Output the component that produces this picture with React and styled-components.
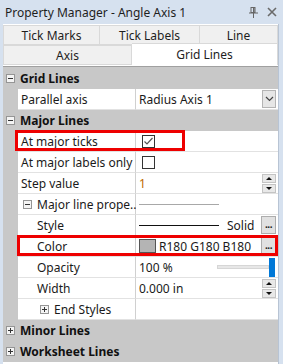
import React from 'react';
import styled, { createGlobalStyle } from 'styled-components';

const GlobalStyle = createGlobalStyle`
  body {
    margin: 0;
    font-family: "Noto Sans", "Open Sans", sans-serif;
  }
`;

const Window = styled.div`
  width: 283px;
  height: 364px;
  background: #d6e1ef;
  display: flex;
  flex-direction: column;
  overflow: hidden;
`;

const TitleBar = styled.div`
  height: 24px;
  display: flex;
  align-items: center;
  padding: 0 6px 0 5px;
  font-size: 12px;
  color: #1e1e1e;
`;

const Title = styled.div`
  flex: 1;
  white-space: nowrap;
`;

const TitleIcons = styled.div`
  display: flex;
  align-items: center;
  gap: 9px;
`;

const Panel = styled.div`
  margin-left: 3px;
  width: 275px;
  flex: 1;
  background: #fff;
  display: flex;
  flex-direction: column;
  border-right: 1px solid #b8c4d4;
`;

const TabRow = styled.div`
  display: flex;
  height: 20px;
  margin-top: ${p => (p.$first ? '1px' : '0')};
  align-items: flex-end;
`;

const Tab = styled.div`
  width: ${p => p.$w}px;
  height: ${p => (p.$active ? 22 : 20)}px;
  box-sizing: border-box;
  display: flex;
  align-items: center;
  justify-content: center;
  font-size: 12px;
  color: #1e1e1e;
  background: ${p => (p.$active ? '#fff' : '#f0f0f0')};
  border: 1px solid #d9d9d9;
  border-left: ${p => (p.$first ? '1px solid #d9d9d9' : 'none')};
  border-bottom: ${p => (p.$active ? 'none' : '1px solid #d9d9d9')};
  position: relative;
  z-index: ${p => (p.$active ? 1 : 0)};
`;

const Grid = styled.div`
  margin-top: 1px;
  border-top: 1px solid #a0a0a0;
  padding-top: 1px;
  display: flex;
  flex-direction: column;
  background: #c8c8c8;
`;

const Category = styled.div`
  height: 21px;
  display: flex;
  align-items: center;
  padding-left: 3px;
  gap: 5px;
  font-size: 12px;
  font-weight: 700;
  color: #111;
`;

const Row = styled.div`
  height: 21px;
  display: flex;
  position: relative;
  font-size: 12px;
  color: #1a1a1a;
`;

const Gutter = styled.div`
  width: 15px;
  flex-shrink: 0;
`;

const Name = styled.div`
  width: 118px;
  flex-shrink: 0;
  box-sizing: border-box;
  background: #fff;
  border-right: 1px solid #d0d0d0;
  border-bottom: 1px solid #e2e2e2;
  display: flex;
  align-items: center;
  gap: 5px;
  padding-left: ${p => p.$indent}px;
  white-space: nowrap;
`;

const Value = styled.div`
  flex: 1;
  box-sizing: border-box;
  background: #fff;
  border-bottom: 1px solid #e2e2e2;
  display: flex;
  align-items: center;
  padding-left: 3px;
  padding-right: 2px;
  white-space: nowrap;
  color: ${p => p.$color || '#1a1a1a'};
`;

const Fill = styled.div`
  flex: 1;
`;

const ToggleBox = styled.div`
  width: 9px;
  height: 9px;
  box-sizing: border-box;
  border: 1px solid #959595;
  background: #f4f4f4;
  position: relative;
  flex-shrink: 0;
  &::before {
    content: '';
    position: absolute;
    left: 1px;
    right: 1px;
    top: 3px;
    height: 1px;
    background: #333;
  }
  &::after {
    content: '';
    display: ${p => (p.$plus ? 'block' : 'none')};
    position: absolute;
    top: 1px;
    bottom: 1px;
    left: 3px;
    width: 1px;
    background: #333;
  }
`;

const CheckBox = styled.div`
  width: 13px;
  height: 13px;
  box-sizing: border-box;
  border: 1px solid #333;
  background: #fff;
  margin-left: 3px;
  display: flex;
  align-items: center;
  justify-content: center;
`;

const DropButton = styled.div`
  width: 14px;
  height: 18px;
  box-sizing: border-box;
  border: 1px solid #b4b4b4;
  background: #e6e6e6;
  display: flex;
  align-items: center;
  justify-content: center;
`;

const Spinner = styled.div`
  width: 14px;
  display: flex;
  flex-direction: column;
  gap: 1px;
`;

const SpinButton = styled.div`
  height: 9px;
  box-sizing: border-box;
  border: 1px solid #c4c4c4;
  background: #e8e8e8;
  display: flex;
  align-items: center;
  justify-content: center;
`;

const Arrow = styled.div`
  width: 0;
  height: 0;
  border-left: 3px solid transparent;
  border-right: 3px solid transparent;
  ${p => (p.$up ? 'border-bottom: 3px solid #111;' : 'border-top: 3px solid #111;')}
`;

const DotsButton = styled.div`
  width: 15px;
  height: 18px;
  box-sizing: border-box;
  border: 1px solid #adadad;
  background: #e1e1e1;
  display: flex;
  align-items: flex-end;
  justify-content: center;
  padding-bottom: 4px;
  font-size: 10px;
  font-weight: 700;
  line-height: 1;
  letter-spacing: -0.5px;
`;

const LineSample = styled.div`
  width: 80px;
  height: 1px;
  background: ${p => p.$color};
  flex-shrink: 0;
`;

const StyleName = styled.span`
  margin-left: 8px;
`;

const Swatch = styled.div`
  width: 17px;
  height: 14px;
  box-sizing: border-box;
  border: 1px solid #555;
  background: rgb(180, 180, 180);
  margin-right: 3px;
`;

const SliderTrack = styled.div`
  width: 52px;
  height: 4px;
  box-sizing: border-box;
  border: 1px solid #d6d6d6;
  background: #e7e7e7;
  margin-left: auto;
`;

const SliderThumb = styled.div`
  width: 6px;
  height: 19px;
  background: #0078d7;
  margin-right: 1px;
`;

const Highlight = styled.div`
  position: absolute;
  top: -1px;
  height: 21px;
  left: ${p => p.$left}px;
  width: ${p => p.$width}px;
  box-sizing: border-box;
  border: 3px solid #ee0000;
  pointer-events: none;
`;

const Bottom = styled.div`
  flex: 1;
  background: #fff;
`;

const Chevron = () => (
  <svg width="9" height="6" viewBox="0 0 9 6">
    <polyline points="1,1 4.5,4.5 8,1" fill="none" stroke="#444" strokeWidth="1.2" />
  </svg>
);

const Check = () => (
  <svg width="11" height="11" viewBox="0 0 11 11">
    <polyline points="1.5,5.5 4,8 9.5,2" fill="none" stroke="#555" strokeWidth="1.2" />
  </svg>
);

const PinIcon = () => (
  <svg width="9" height="11" viewBox="0 0 9 11">
    <rect x="2" y="0.5" width="4" height="5" fill="none" stroke="#666" />
    <rect x="4" y="1" width="1.5" height="4.5" fill="#666" />
    <line x1="0" y1="6" x2="9" y2="6" stroke="#666" />
    <line x1="4.5" y1="6" x2="4.5" y2="11" stroke="#666" />
  </svg>
);

const CloseIcon = () => (
  <svg width="10" height="10" viewBox="0 0 10 10">
    <path d="M1 1 L9 9 M9 1 L1 9" stroke="#6a6a6a" strokeWidth="1.6" />
  </svg>
);

const Spin = () => (
  <Spinner>
    <SpinButton><Arrow $up /></SpinButton>
    <SpinButton><Arrow /></SpinButton>
  </Spinner>
);

const App = () => {
  return (
    <Window>
      <GlobalStyle />
      <TitleBar>
        <Title>Property Manager - Angle Axis 1</Title>
        <TitleIcons>
          <PinIcon />
          <CloseIcon />
        </TitleIcons>
      </TitleBar>
      <Panel>
        <TabRow $first>
          <Tab $w={97} $first>Tick Marks</Tab>
          <Tab $w={100}>Tick Labels</Tab>
          <Tab $w={78}>Line</Tab>
        </TabRow>
        <TabRow>
          <Tab $w={129} $first>Axis</Tab>
          <Tab $w={146} $active>Grid Lines</Tab>
        </TabRow>
        <Grid>
          <Category><ToggleBox />Grid Lines</Category>
          <Row>
            <Gutter />
            <Name $indent={3}>Parallel axis</Name>
            <Value>
              Radius Axis 1
              <Fill />
              <DropButton><Chevron /></DropButton>
            </Value>
          </Row>
          <Category><ToggleBox />Major Lines</Category>
          <Row>
            <Gutter />
            <Name $indent={3}>At major ticks</Name>
            <Value>
              <CheckBox><Check /></CheckBox>
            </Value>
            <Highlight $left={12} $width={170} />
          </Row>
          <Row>
            <Gutter />
            <Name $indent={3}>At major labels only</Name>
            <Value>
              <CheckBox />
            </Value>
          </Row>
          <Row>
            <Gutter />
            <Name $indent={3}>Step value</Name>
            <Value $color="#c06a00">
              1
              <Fill />
              <Spin />
            </Value>
          </Row>
          <Row>
            <Gutter />
            <Name $indent={5}><ToggleBox />Major line prope...</Name>
            <Value>
              <LineSample $color="#a8a8a8" />
            </Value>
          </Row>
          <Row>
            <Gutter />
            <Name $indent={19}>Style</Name>
            <Value>
              <LineSample $color="#111" />
              <StyleName>Solid</StyleName>
              <Fill />
              <DotsButton>...</DotsButton>
            </Value>
          </Row>
          <Row>
            <Gutter />
            <Name $indent={19}>Color</Name>
            <Value>
              <Swatch />
              R180 G180 B180
              <Fill />
              <DotsButton>...</DotsButton>
            </Value>
            <Highlight $left={14} $width={261} />
          </Row>
          <Row>
            <Gutter />
            <Name $indent={19}>Opacity</Name>
            <Value>
              100 %
              <SliderTrack />
              <SliderThumb />
            </Value>
          </Row>
          <Row>
            <Gutter />
            <Name $indent={19}>Width</Name>
            <Value>
              0.000 in
              <Fill />
              <Spin />
            </Value>
          </Row>
          <Row>
            <Gutter />
            <Name $indent={22}><ToggleBox $plus />End Styles</Name>
            <Value />
          </Row>
          <Category><ToggleBox $plus />Minor Lines</Category>
          <Category><ToggleBox $plus />Worksheet Lines</Category>
        </Grid>
        <Bottom />
      </Panel>
    </Window>
  );
};

export default App;
